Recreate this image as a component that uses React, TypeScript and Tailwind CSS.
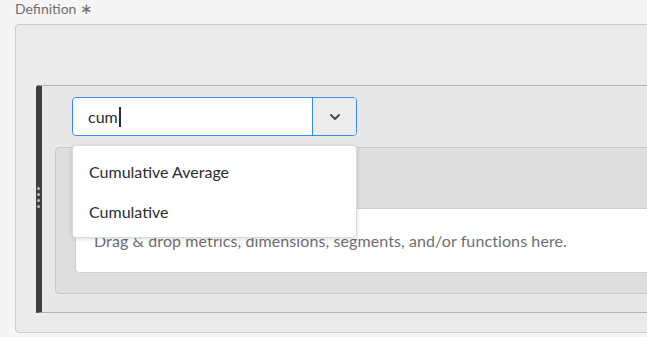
export default function App() {
  const font = { fontFamily: "Lato, 'Open Sans', sans-serif" };
  return (
    <div className="h-[337px] w-[647px] overflow-hidden bg-[#f5f5f5]" style={font}>
      <div className="-mt-[1px] pl-[15px] text-[14px] leading-[18px] text-[#6e6e6e]">
        Definition <span className="text-[15px]">∗</span>
      </div>
      <div className="mt-[6px] ml-[15px] w-[700px] rounded-[4px] border border-[#cbcbcb] bg-[#ebebeb] pl-[20px] pt-[60px] pb-[19px]">
        <div className="relative rounded-tl-[3px] border-y border-l-[6px] border-y-[#b3b3b3] border-l-[#3f3f3f] bg-[#e8e8e8] pt-[11px] pb-[18px]">
          <div className="absolute left-[-5px] top-[101px] flex flex-col gap-[3px]">
            <span className="h-[3px] w-[3px] rounded-full bg-[#b9b9b9]" />
            <span className="h-[3px] w-[3px] rounded-full bg-[#b9b9b9]" />
            <span className="h-[3px] w-[3px] rounded-full bg-[#b9b9b9]" />
            <span className="h-[3px] w-[3px] rounded-full bg-[#b9b9b9]" />
          </div>
          <div className="ml-[30px] flex h-[39px] w-[285px] rounded-[4px] border border-[#378ef0] bg-white">
            <div className="flex flex-1 items-center pl-[15px] text-[16px] text-[#2c2c2c]">
              cum<span className="ml-[1px] h-[20px] w-[2px] bg-[#2c2c2c]" />
            </div>
            <div className="flex w-[44px] items-center justify-center rounded-r-[3px] border-l border-[#378ef0] bg-[#ececec]">
              <svg width="12" height="8" viewBox="0 0 12 8">
                <path d="M2 2l4 4 4-4" fill="none" stroke="#4b4b4b" strokeWidth="2" strokeLinecap="round" strokeLinejoin="round" />
              </svg>
            </div>
          </div>
          <div className="mt-[11px] ml-[13px] rounded-[4px] border border-[#c8c8c8] bg-[#dedede] pl-[19px] pt-[60px] pb-[20px]">
            <div className="flex h-[65px] items-center rounded-l-[4px] border border-[#d0d0d0] bg-white pl-[18px] text-[16px] tracking-[0.1px] text-[#6e6e6e]">
              Drag &amp; drop metrics, dimensions, segments, and/or functions here.
            </div>
          </div>
          <div className="absolute left-[30px] top-[59px] w-[285px] rounded-[4px] border border-[#dadada] bg-white pt-[6px] pb-[5px] text-[16px] text-[#2c2c2c] shadow-[0_1px_4px_rgba(0,0,0,0.15)]">
            <div className="flex h-[40px] items-center pl-[16px]">Cumulative Average</div>
            <div className="flex h-[40px] items-center pl-[16px]">Cumulative</div>
          </div>
        </div>
      </div>
    </div>
  );
}
